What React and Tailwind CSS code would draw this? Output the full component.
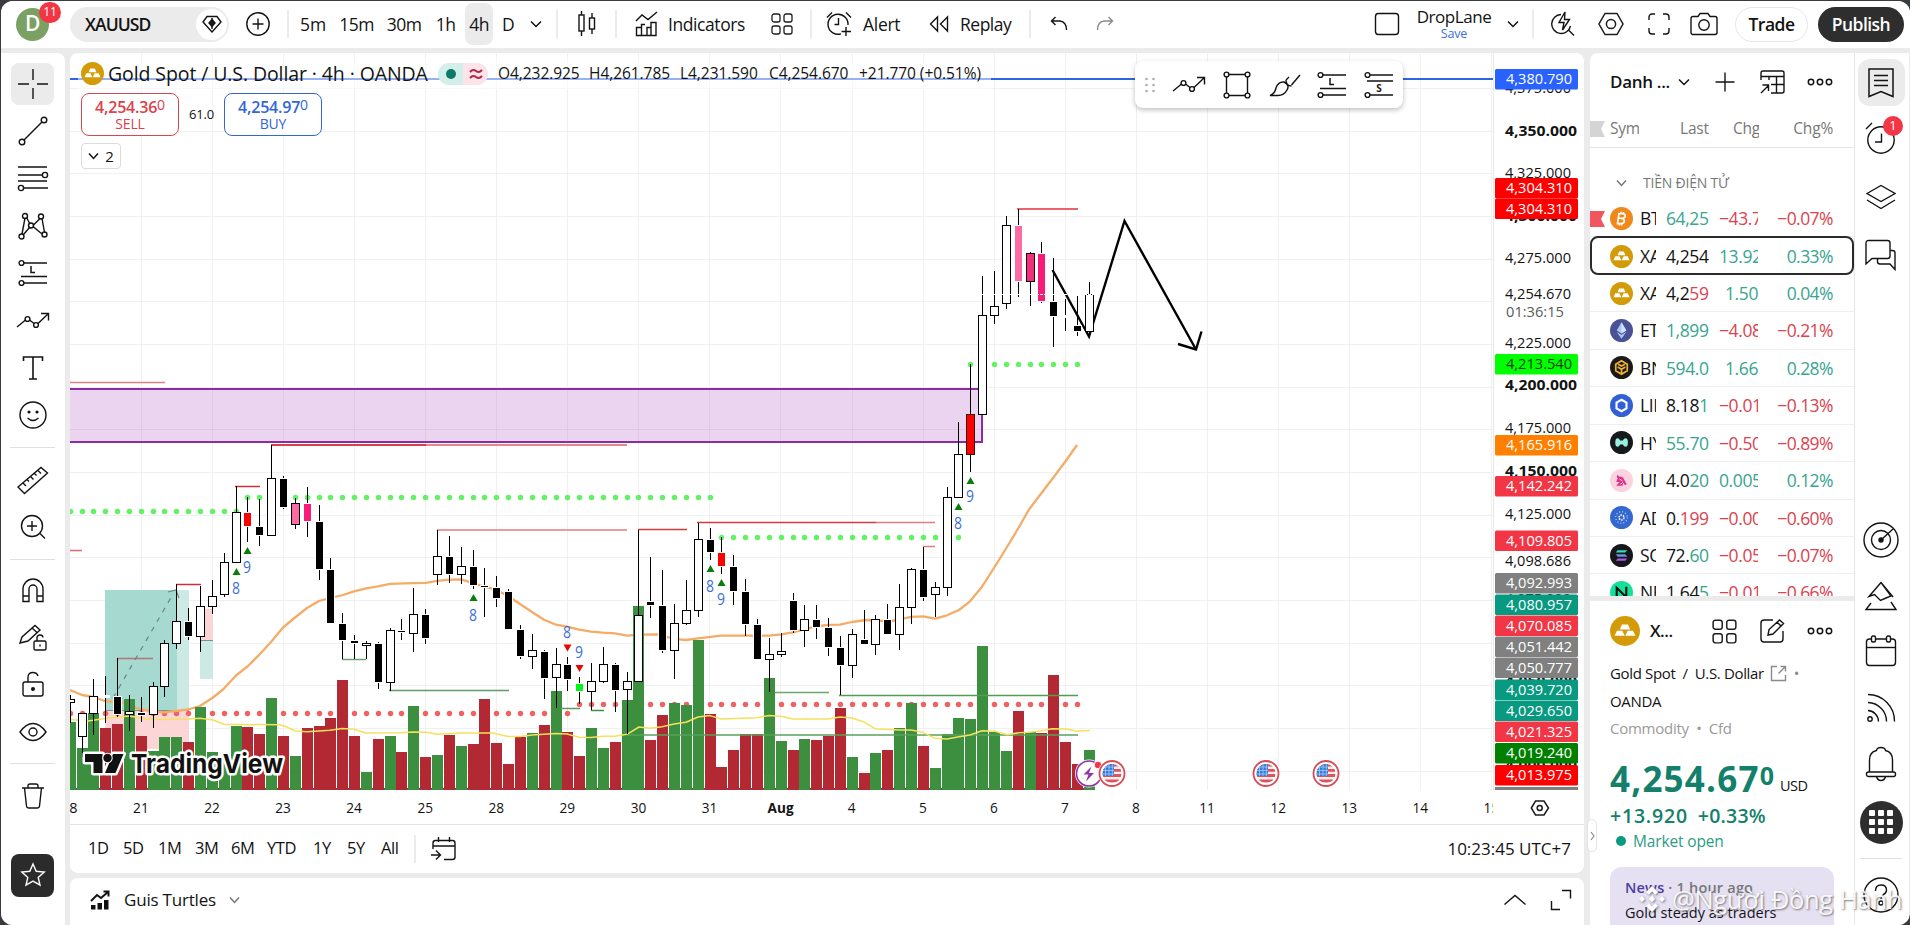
import { Fragment } from 'react';

const GRID_X = 141.7;
const barX = (k) => Math.round(140.75 + 11.85 * k);

// [index, high, bodyTop, bodyBottom, low, kind]
const candles = [
  [-6, 695, 699, 703, 723, 'w'], [-5, 713, 713, 737, 757, 'w'], [-4, 679, 696, 714, 735, 'w'], [-3, 676, 696, 697, 723, 'd'],
  [-2, 658, 697, 714, 717, 'b'], [-1, 695, 711, 715, 731, 'w'], [0, 697, 713, 715, 722, 'b'], [1, 682, 686, 715, 728, 'w'],
  [2, 640, 643, 687, 697, 'w'], [3, 584, 621, 644, 649, 'w'], [4, 608, 622, 636, 640, 'b'], [5, 586, 606, 637, 652, 'w'],
  [6, 580, 596, 607, 614, 'w'], [7, 553, 562, 595, 597, 'w'], [8, 486, 512, 563, 563, 'w'], [9, 497, 513, 526, 542, 'r'],
  [10, 499, 527, 535, 546, 'b'], [11, 445, 478, 536, 536, 'w'], [12, 476, 479, 507, 509, 'b'], [13, 498, 503, 525, 529, 'po'],
  [14, 487, 504, 521, 537, 'h'], [15, 505, 522, 569, 580, 'b'], [16, 558, 570, 623, 623, 'b'], [17, 613, 624, 640, 659, 'b'],
  [18, 635, 641, 643, 659, 'b'], [19, 641, 643, 646, 659, 'w'], [20, 642, 644, 682, 689, 'b'], [21, 628, 630, 683, 691, 'w'],
  [22, 619, 631, 632, 640, 'b'], [23, 588, 614, 634, 652, 'w'], [24, 609, 615, 638, 644, 'b'], [25, 530, 556, 575, 585, 'w'],
  [26, 536, 557, 574, 583, 'b'], [27, 547, 566, 575, 584, 'w'], [28, 550, 567, 585, 589, 'b'], [29, 568, 586, 587, 617, 'b'],
  [30, 576, 588, 598, 607, 'b'], [31, 589, 592, 629, 629, 'b'], [32, 625, 630, 656, 659, 'b'], [33, 634, 650, 657, 669, 'w'],
  [34, 650, 652, 678, 699, 'b'], [35, 648, 664, 678, 708, 'w'], [36, 657, 665, 679, 691, 'b'], [37, 677, 684, 691, 704, 'l'],
  [38, 663, 681, 692, 710, 'w'], [39, 647, 664, 682, 683, 'w'], [40, 663, 665, 690, 712, 'b'], [41, 672, 681, 690, 734, 'w'],
  [42, 530, 615, 682, 682, 'w'], [43, 557, 602, 605, 618, 'b'], [44, 570, 606, 650, 653, 'b'], [45, 604, 623, 651, 679, 'w'],
  [46, 580, 610, 624, 625, 'w'], [47, 523, 539, 611, 617, 'w'], [48, 528, 540, 552, 560, 'b'], [49, 537, 553, 566, 574, 'r'],
  [50, 555, 567, 591, 605, 'b'], [51, 579, 592, 624, 636, 'b'], [52, 619, 625, 659, 659, 'b'], [53, 638, 654, 660, 692, 'w'],
  [54, 633, 651, 655, 657, 'w'], [55, 593, 601, 630, 633, 'b'], [56, 605, 619, 631, 647, 'w'], [57, 605, 620, 627, 639, 'b'],
  [58, 618, 628, 647, 656, 'b'], [59, 636, 648, 665, 695, 'b'], [60, 629, 634, 666, 678, 'w'], [61, 610, 640, 644, 644, 'b'],
  [62, 615, 619, 645, 655, 'w'], [63, 604, 620, 634, 634, 'b'], [64, 584, 607, 635, 650, 'w'], [65, 568, 569, 608, 624, 'w'],
  [66, 547, 570, 597, 601, 'b'], [67, 582, 587, 595, 617, 'w'], [68, 487, 497, 588, 596, 'w'], [69, 422, 454, 498, 498, 'w'],
  [70, 364, 414, 455, 472, 'ro'], [71, 276, 315, 415, 415, 'w'], [72, 271, 306, 316, 324, 'w'], [73, 216, 225, 304, 309, 'w'],
  [74, 209, 226, 281, 297, 'p'], [75, 252, 253, 282, 306, 'ho'], [76, 242, 254, 301, 303, 'h'], [77, 258, 302, 316, 347, 'b'],
  [78, 299, 316, 317, 331, 'd'], [79, 296, 326, 331, 336, 'b'], [80, 282, 294, 332, 332, 'w'],
];

const kinds = {
  w: ['#ffffff', '#000000'],
  b: ['#000000', '#ffffff'],
  d: ['#ffffff', '#ffffff'],
  r: ['#ff0000', '#ffffff'],
  ro: ['#ff0000', '#3a1208'],
  p: ['#fb6ba4', '#ffffff'],
  po: ['#fb6ba4', '#000000'],
  h: ['#f81b78', '#ffffff'],
  ho: ['#f0307c', '#1a0008'],
  l: ['#00f51d', '#ffffff'],
};

// top of each volume bar, starting at index -6
const volumes = [
  'g722', 'g748', 'g713', 'r728', 'r724', 'g699', 'r736', 'g751', 'g737', 'g737', 'r742', 'g707', 'g752', 'g756', 'g726', 'r727',
  'r734', 'g698', 'r736', 'g756', 'r728', 'r726', 'r718', 'r680', 'r736', 'g772', 'r739', 'g736', 'r752', 'g706', 'r757', 'g755',
  'r735', 'g746', 'r744', 'r699', 'r743', 'r764', 'r737', 'g733', 'r725', 'g691', 'r732', 'r756', 'g728', 'g748', 'r742', 'g700',
  'g606', 'r740', 'r715', 'g703', 'g705', 'g640', 'r714', 'r767', 'r750', 'r734', 'r734', 'g678', 'g741', 'r750', 'g739', 'r740',
  'r736', 'r708', 'g757', 'r773', 'g753', 'r750', 'g728', 'g703', 'r746', 'g768', 'g734', 'g718', 'g719', 'g646', 'g732', 'g751',
  'r711', 'g732', 'r733', 'r675', 'r742', 'r764', 'g750',
];

const maLine =
  '70,690 82,695 93,697 105,701 123,703 140,709 153,711.5 164,712.3 188,709.5 200,706 213,697.5 223,689.5 236,675.5 248,666 259,655 271,642 283,627.5 295,617.5 307,608 319,601 330,598 343,595 354,591.3 366,588.3 378,586.3 390,583.9 413,583.2 426,582.8 437,580.8 449,579.6 461,579.4 473,583.2 484,586.5 496,589.7 508,596 520,604 532,612 544,619.7 556,624.7 567,626.7 579,629.7 591,631.7 603,632.7 615,633.3 627,635.6 640,634.7 657,634.3 667,637 674,638.8 686,640 698,638.4 721,635.7 769,635.7 781,634.3 793,632.4 804,629.3 816,626.5 828,624.9 840,624.7 852,622 866,620 875,620.5 890,621.3 899,619.5 911,616.8 923,616.4 935,618.6 947,615.3 959,610 970,601.3 982,586.7 994,568 1007,547 1019,527 1029,509.5 1040,495 1053,478 1065,462 1077,445';

const volumeLine =
  '70,719.5 88,721 105,718.5 129,716 143,718.5 157,719.5 188,719 200,718.3 213,720 224,724.3 237,724.5 280,724.8 287,727 295,731 307,731.8 319,731 330,730.3 342,728.6 354,729.3 366,733 400,732.7 413,732 426,732.3 437,734.3 461,733 493,733 508,736.6 520,736.6 532,735 556,733.6 567,734 579,737.3 591,737.5 603,736.2 615,736.2 627,734.3 639,727 650,728.3 662,726.7 674,724 686,722.3 698,717 710,715.6 721,719 757,717.8 769,715.5 781,716.3 793,719 828,719 840,717 852,718 864,722 875,728.7 899,730 911,730 923,732.3 935,738.3 947,739 959,736.7 970,735 982,730.8 994,731 1007,734.7 1019,732.7 1029,732.3 1040,731 1052,728.7 1066,729 1077,731.3 1090,730.5';

// [x1, x2, y, colour, width]
const levels = [
  [70, 165, 382.5, '#e08088', 1.5], [70, 82, 550.5, '#e06a72', 1.5], [117, 153, 658.5, '#b07478', 1.5], [176, 201, 584.5, '#c9303a', 1.5],
  [235, 260, 486.5, '#c9303a', 1.5], [271, 426, 445, '#dc3f4b', 2], [426, 627, 445, '#ea858e', 2], [437, 627, 530, '#ea9ca2', 2],
  [638, 687, 529.5, '#d23a3c', 1.5], [697, 876, 522.5, '#d03a40', 1.5], [876, 935, 522.5, '#e57a80', 1.5], [923, 935, 546.5, '#e57a80', 1.5],
  [1017, 1078, 209, '#e96469', 2],
  [342, 366, 659.5, '#6aa66d', 1.5], [389, 509, 690.5, '#5fa062', 1.5], [561, 580, 708.5, '#5f9a62', 1.5], [591, 604, 710.5, '#3f9142', 1.5],
  [775, 829, 692.5, '#6aa66d', 1.5], [839, 1078, 695.5, '#4f9f52', 1.5], [627, 1078, 735, '#58a05b', 1.5],
];

const greenDots = [[-6, 8, 511.5], [9, 48, 497.5], [49, 69, 537.5], [70, 79, 364.5]];
const redDots = [[-6, 36, 713.5], [37, 79, 704.5]];

// [index, triangle y, number y, number, direction]
const signals = [
  [8, 571.5, 588, '8', 'up'], [9, 550.5, 567, '9', 'up'], [28, 597.5, 615, '8', 'up'], [36, 648, 632, '8', 'down'], [37, 668.5, 652, '9', 'down'],
  [48, 568.5, 586, '8', 'up'], [49, 582.5, 599.5, '9', 'up'], [69, 506.5, 523, '8', 'up'], [70, 480.5, 496.5, '9', 'up'],
];

// [label, centre y, bold]
const priceTicks = [
  ['4,375.000', 88], ['4,350.000', 130.5, true], ['4,325.000', 173], ['4,300.000', 216, true], ['4,275.000', 257.5], ['4,254.670', 293.5],
  ['4,225.000', 343], ['4,200.000', 385, true], ['4,175.000', 428], ['4,150.000', 471, true], ['4,125.000', 513.5], ['4,098.686', 561],
  ['4,075.000', 599], ['4,050.000', 681, true], ['4,000.000', 765, true],
];

const priceTags = [
  ['4,380.790', 69, '#2962ff'], ['4,304.310', 178, '#ff0000'], ['4,304.310', 198.5, '#ff0000'], ['4,213.540', 354, '#00ff00', '#0a3d0a'],
  ['4,165.916', 435, '#ff8000'], ['4,142.242', 476, '#f23645'], ['4,109.805', 530.5, '#f23645'], ['4,092.993', 573, '#808080'],
  ['4,080.957', 594.5, '#089981'], ['4,070.085', 615.5, '#f23645'], ['4,051.442', 636.5, '#808080'], ['4,050.777', 657.5, '#808080'],
  ['4,039.720', 679.5, '#089981'], ['4,029.650', 700.5, '#089981'], ['4,021.325', 721.5, '#f23645'], ['4,019.240', 743, '#008000'],
  ['4,013.975', 765, '#ff0000'],
];

const days = ['21', '22', '23', '24', '25', '28', '29', '30', '31', 'Aug', '4', '5', '6', '7', '8', '11', '12', '13', '14', '15'];

const range = (a, b) => Array.from({ length: b - a + 1 }, (_, i) => a + i);

function Icon({ w = 28, h = 28, sw = 1.4, children, className = '', fill = 'none' }) {
  return (
    <svg width={w} height={h} viewBox={`0 0 ${w} ${h}`} fill={fill} stroke="currentColor" strokeWidth={sw} className={`shrink-0 ${className}`}>
      {children}
    </svg>
  );
}

const Chevron = ({ w = 12, className = '' }) => (
  <Icon w={w} h={8} sw={1.5} className={className}>
    <path d={`M1 1.5 L${w / 2} 6.5 L${w - 1} 1.5`} />
  </Icon>
);

const Divider = ({ className = '' }) => <div className={`h-7 w-[2px] shrink-0 bg-[#ebebeb] ${className}`} />;

function GoldIcon({ size }) {
  return (
    <svg width={size} height={size} viewBox="0 0 24 24" className="shrink-0">
      <circle cx="12" cy="12" r="12" fill="#d49b08" />
      <path d="M9.600 6.800h4.800l1.700 4H7.900zM5.600 11.800h4.200l2 4H3.600zM14.200 11.800h4.200l2 4h-8.200z" fill="#fff" />
    </svg>
  );
}

function GridIcon({ size = 22 }) {
  return (
    <svg width={size} height={size} viewBox="0 0 22 22" fill="none" stroke="#1c1c1c" strokeWidth="1.3">
      <rect x="1" y="1" width="8" height="8" rx="2" />
      <rect x="13" y="1" width="8" height="8" rx="2" />
      <rect x="1" y="13" width="8" height="8" rx="2" />
      <rect x="13" y="13" width="8" height="8" rx="2" />
    </svg>
  );
}

const DotsIcon = () => (
  <Icon w={26} h={10} sw={1.5}>
    <circle cx="4" cy="5" r="2.7" />
    <circle cx="13" cy="5" r="2.7" />
    <circle cx="22" cy="5" r="2.7" />
  </Icon>
);

const HexIcon = ({ w = 26, h = 24 }) => (
  <svg width={w} height={h} viewBox="0 0 26 24" fill="none" stroke="#1c1c1c" strokeWidth="1.5" className="shrink-0">
    <path d="M7 1.5h12L25 12l-6 10.500H7L1 12z" />
    <circle cx="13" cy="12" r="4.600" />
  </svg>
);

const PathIcon = () => (
  <Icon w={34} h={24}>
    <path d="M1 18 L9.500 11 M13.500 11 L18 14.500 M22 14.500 L32 5 M25 4.500h7.500v7" />
    <circle cx="11.500" cy="10" r="2.400" />
    <circle cx="20" cy="16" r="2.400" />
  </Icon>
);

const LongIcon = ({ letter = 'L' }) => (
  <Icon w={30} h={28}>
    <path d={letter === 'L' ? 'M6 4h23 M3 17.500h26 M6 24h23' : 'M6 4h23 M3 10h26 M6 24h23'} />
    <circle cx="3.500" cy="4" r="2.400" fill="#fff" />
    <circle cx="3.500" cy="24" r="2.400" fill="#fff" />
    {letter === 'L' ? (
      <path d="M13 7v6.500h4" strokeWidth="1.500" />
    ) : (
      <text x="15" y="20.500" fontSize="10" fontWeight="700" fill="#1c1c1c" stroke="none" textAnchor="middle">S</text>
    )}
  </Icon>
);

function Header() {
  return (
    <header className="flex h-[47px] items-center bg-white pb-[1px] text-[17.5px] font-medium tracking-[-0.5px]">
      <div className="relative flex w-[63px] justify-center">
        <div className="flex h-[33px] w-[33px] items-center justify-center rounded-full bg-[#7aa163] text-[21px] font-semibold text-white">D</div>
        <div className="absolute -top-[6px] left-[38px] flex h-[21px] w-[22px] items-center justify-center rounded-full bg-[#f23645] text-[12px] text-white tracking-normal">11</div>
      </div>
      <div className="ml-[6px] flex h-[35px] w-[159px] items-center justify-between rounded-full bg-[#ebebeb] pr-[2px] pl-[15px]">
        <span className="font-semibold tracking-[-0.9px]">XAUUSD</span>
        <span className="flex h-[31px] w-[31px] items-center justify-center rounded-full bg-white">
          <Icon w={20} h={18}>
            <path d="M5 1.500h10l4 5.500-9 10-9-10zM10 3v11" />
            <path d="M10 4.500l3 3.500-3 3.500L7 8z" fill="#1c1c1c" />
          </Icon>
        </span>
      </div>
      <div className="flex w-[58px] justify-center">
        <Icon w={24} h={24}>
          <circle cx="12" cy="12" r="11.200" />
          <path d="M12 6.500v11M6.500 12h11" />
        </Icon>
      </div>
      <Divider />
      <div className="flex w-[48px] justify-center tracking-[-0.200px]">5m</div>
      <div className="flex w-[39px] justify-center">15m</div>
      <div className="flex w-[56px] justify-center">30m</div>
      <div className="flex w-[27px] justify-center">1h</div>
      <div className="flex w-[40px] justify-center">
        <span className="flex h-[42px] w-[28px] items-center justify-center rounded-lg bg-[#ebebeb]">4h</span>
      </div>
      <div className="flex w-[18px] justify-center">D</div>
      <div className="flex w-[39px] justify-center pr-[2px]"><Chevron /></div>
      <Divider />
      <div className="flex w-[57px] justify-center">
        <Icon w={18} h={26}>
          <path d="M3.500 0v4M3.500 20v5M14 2v5M14 18v5" />
          <rect x="1" y="4" width="5" height="16" />
          <rect x="11.500" y="7" width="5" height="11" />
        </Icon>
      </div>
      <Divider />
      <Icon w={23} h={26} className="ml-[18px]">
        <path d="M1 10l6-6 6 4.500L22 1 M1.500 24.500v-8h5v8zM6.500 24.500v-11h3.500M12 24.500v-8h4v8zM16 24.500V11.500h5v13z M1.500 24.500h20" />
      </Icon>
      <span className="ml-[10px] w-[77px] tracking-[-0.420px]">Indicators</span>
      <div className="ml-[8px] flex w-[57px] justify-center"><GridIcon size={22} /></div>
      <Divider />
      <Icon w={26} h={26} className="ml-[14px]">
        <path d="M15 22.800A10 10 0 1 1 22 14M12.500 7v6.500H8.500M1 6.500L6 1.500M20 1.500l5 5M20 16v9M15.500 20.500h9.500" />
      </Icon>
      <span className="ml-[11px] w-[39px] tracking-[-0.300px]">Alert</span>
      <Icon w={20} h={18} className="ml-[27px]">
        <path d="M8.500 2v14L1.500 9zM18.500 2v14l-7-7z" />
      </Icon>
      <span className="ml-[11px] w-[53px]">Replay</span>
      <Divider className="ml-[16px]" />
      <Icon w={18} h={16} className="ml-[19px]"><path d="M5.500 1L1.500 5l4 4M1.500 5H10q6.500 1 6.500 9" /></Icon>
      <Icon w={18} h={16} className="ml-[28px] text-[#8a8a8a]"><path d="M12.500 1l4 4-4 4M16.500 5H8Q1.500 6 1.500 14" /></Icon>

      <div className="ml-auto flex items-center pr-[6px]">
        <Icon w={26} h={24}><rect x="1.500" y="1.500" width="23" height="21" rx="3" /></Icon>
        <div className="ml-[16px] w-[76px] text-center leading-none">
          <div className="text-[17px] tracking-[-0.450px]">DropLane</div>
          <div className="pt-[3px] text-[12.500px] font-normal tracking-[-0.200px] text-[#3a6fd8]">Save</div>
        </div>
        <Chevron className="ml-[15px]" />
        <Divider className="ml-[13px]" />
        <Icon w={24} h={26} className="ml-[17px]">
          <path d="M10 3.500A9.500 9.500 0 1 0 19.500 15M17 18.500l6 6M14 1L8 11.500h5L11.500 19 18.500 8.500h-5z" />
        </Icon>
        <div className="ml-[23px]"><HexIcon /></div>
        <Icon w={22} h={22} className="ml-[24px]">
          <path d="M1 7V4a3 3 0 0 1 3-3h3M15 1h3a3 3 0 0 1 3 3v3M21 15v3a3 3 0 0 1-3 3h-3M7 21H4a3 3 0 0 1-3-3v-3" />
        </Icon>
        <Icon w={28} h={24} className="ml-[20px]">
          <path d="M3 4.500h5l2-3h8l2 3h5a2 2 0 0 1 2 2v14a2 2 0 0 1-2 2H3a2 2 0 0 1-2-2v-14a2 2 0 0 1 2-2z" />
          <circle cx="14" cy="13" r="5.200" />
        </Icon>
        <div className="ml-[17px] flex h-[35px] w-[73px] items-center justify-center rounded-full border border-[#e6e6e6] tracking-[-0.500px] font-semibold">Trade</div>
        <div className="ml-[10px] flex h-[35px] w-[86px] items-center justify-center rounded-full bg-[#2e2e2e] text-white tracking-[-0.550px] font-semibold">Publish</div>
      </div>
    </header>
  );
}

function LeftTools() {
  const slot = 'flex h-[47.400px] shrink-0 items-center justify-center';
  const rule = 'mx-auto h-px w-[45px] shrink-0 bg-[#e0e0e0]';
  return (
    <nav className="flex w-[64px] shrink-0 flex-col rounded-tr-lg bg-white pt-[7px] pr-[1px]">
      <div className={slot}>
        <div className="flex h-[42px] w-[43px] items-center justify-center rounded-lg bg-[#ebebeb]">
          <Icon w={30} h={30}><path d="M15 0v11M15 19v11M0 15h11M19 15h11" /></Icon>
        </div>
      </div>
      <div className={slot}>
        <Icon w={30} h={30}>
          <circle cx="4" cy="26" r="2.800" /><circle cx="26" cy="4" r="2.800" /><path d="M6 24L24 6" />
        </Icon>
      </div>
      <div className={slot}>
        <Icon w={32} h={28}>
          <path d="M1 3h29M1 11h24M1 17h29M7 24h24" />
          <circle cx="28" cy="11" r="2.600" /><circle cx="4" cy="24" r="2.600" />
        </Icon>
      </div>
      <div className={slot}>
        <Icon w={30} h={28}>
          <path d="M4 22L7 6M8.500 5.500L12 12M5 23L12 15M15.500 13L22 6.500M24 6.500l2.500 14M24 22l-9-7.500" />
          <circle cx="7" cy="4" r="2.500" /><circle cx="23" cy="4.500" r="2.500" /><circle cx="13" cy="13.500" r="2.500" />
          <circle cx="3.500" cy="24.500" r="2.500" /><circle cx="26.500" cy="22.500" r="2.500" />
        </Icon>
      </div>
      <div className={slot}><LongIcon /></div>
      <div className={slot}><PathIcon /></div>
      <div className={slot}>
        <Icon w={22} h={26}><path d="M1.500 6V2h19v4M11 2v22M7 24h8" strokeWidth="1.600" /></Icon>
      </div>
      <div className={slot}>
        <Icon w={28} h={28}>
          <circle cx="14" cy="14" r="13" /><path d="M8.500 17q5.500 5 11 0" />
          <circle cx="10" cy="11" r="0.900" fill="#1c1c1c" /><circle cx="18" cy="11" r="0.900" fill="#1c1c1c" />
        </Icon>
      </div>
      <div className={`${rule} mt-[8px] mb-[8px]`} />
      <div className={slot}>
        <Icon w={32} h={30}>
          <path d="M1 22L24 2.500l6.500 5.500L7.500 28.500zM6 18l3 3M10 14.500l2 2M13.500 11.500l3 3M17.500 8.500l2 2M21 5.500l3 3" />
        </Icon>
      </div>
      <div className={slot}>
        <Icon w={26} h={26}>
          <circle cx="12" cy="12" r="10.500" /><path d="M12 7v10M7 12h10M20 19.500l5 5" />
        </Icon>
      </div>
      <div className={`${rule} mt-[8px] mb-[6px]`} />
      <div className={slot}>
        <Icon w={24} h={26}>
          <path d="M2 24.500V12a10 10 0 0 1 20 0v12.500h-6V12a4 4 0 0 0-8 0v12.500zM2 19h6M16 19h6" />
        </Icon>
      </div>
      <div className={slot}>
        <Icon w={28} h={28}>
          <path d="M1 20l2-6L16 2.500l5 4.500L9 18l-8 2zM13 5l5 4.500" />
          <rect x="15" y="18" width="12" height="9" rx="1.500" /><path d="M18 18v-2.500a3 3 0 0 1 6-1M21 21.500v2" />
        </Icon>
      </div>
      <div className={slot}>
        <Icon w={22} h={26}>
          <rect x="1" y="11" width="20" height="14" rx="2" /><path d="M6 11V6.500q0-5 5-5 4 0 5 3.500" />
          <circle cx="11" cy="18" r="1.300" fill="#1c1c1c" />
        </Icon>
      </div>
      <div className={slot}>
        <Icon w={28} h={20}>
          <path d="M1 10Q7 1.500 14 1.500T27 10Q21 18.500 14 18.500T1 10z" /><circle cx="14" cy="10" r="4" />
        </Icon>
      </div>
      <div className={`${rule} mt-[8px] mb-[8px]`} />
      <div className={slot}>
        <Icon w={24} h={26}>
          <path d="M1 5h22M7 5V3q0-2 2-2h6q2 0 2 2v2M3.500 5l2 18q.2 2 2 2h9q1.800 0 2-2l2-18" />
        </Icon>
      </div>
      <div className="mx-auto mt-[34px] flex h-[43px] w-[43px] shrink-0 items-center justify-center rounded-lg bg-[#2b2b2b] text-white">
        <Icon w={26} h={26}><path d="M13 2l3.200 7.300 8 .8-6 5.300 1.800 7.800-7-4.100-7 4.100 1.800-7.800-6-5.300 8-.8z" /></Icon>
      </div>
    </nav>
  );
}

function Flag({ x }) {
  return (
    <g transform={`translate(${x} 773.500)`}>
      <circle r="14" fill="#fff" />
      <circle r="12.500" fill="#fff" stroke="#d94a54" strokeWidth="1.800" />
      <clipPath id={`flag${x}`}><circle r="9.500" /></clipPath>
      <g clipPath={`url(#flag${x})`}>
        <rect x="-10" y="-10" width="20" height="20" fill="#fbeff0" />
        <path d="M-10-8.500h20M-10-3.200h20M-10 2h20M-10 7.500h20" stroke="#e0525c" strokeWidth="2.800" />
        <rect x="-10" y="-10" width="12" height="12.500" fill="#3478d8" />
        <path d="M-10-6.500H2M-10-3H2M-10 .5H2M-6.500-10V2.500M-3-10V2.500M.3-10V2.500" stroke="#a9cdf5" strokeWidth="0.800" />
      </g>
    </g>
  );
}

function Chart() {
  return (
    <svg width="1514" height="771" viewBox="70 53 1514 771" className="block" fontFamily='"Open Sans", sans-serif'>
      <clipPath id="plot"><rect x="70" y="53" width="1423" height="737" /></clipPath>
      <g clipPath="url(#plot)">
        <g fill="#f0f0f0" shapeRendering="crispEdges">
          {range(0, 19).map((i) => <rect key={i} x={Math.floor(GRID_X + 71.03 * i)} y="53" width="1" height="737" />)}
          {range(0, 16).map((i) => <rect key={i} x="70" y={Math.floor(88.6 + 42.67 * i)} width="1423" height="1" />)}
        </g>

        {/* supply zone */}
        <rect x="60" y="389" width="922" height="53" fill="rgba(156,39,176,0.2)" stroke="#8a2ca3" strokeWidth="2" />

        {/* position boxes */}
        <rect x="105" y="590" width="84" height="120.500" fill="#cce9e3" />
        <rect x="105" y="590" width="72" height="120.500" fill="#a6d9d0" />
        <rect x="105" y="710.500" width="84" height="38.500" fill="#fcd5d7" />
        <path d="M105 710.500h84" stroke="#7d8f8e" />
        <rect x="200" y="609" width="13" height="31" fill="#fcd5d7" />
        <rect x="200" y="640" width="13" height="39" fill="#cce9e3" />
        <path d="M200 640.500h13" stroke="#7d8f8e" />

        {greenDots.map(([a, b, y]) => range(a, b).map((k) => <circle key={`${y}-${k}`} cx={barX(k) + 0.5} cy={y} r="2.700" fill="#63f263" />))}
        {redDots.map(([a, b, y]) => range(a, b).map((k) => <circle key={`${y}-${k}`} cx={barX(k) + 0.5} cy={y} r="2.700" fill="#f06262" />))}
        <polyline points={maLine} fill="none" stroke="#f5ac66" strokeWidth="2.300" strokeLinejoin="round" />

        <g shapeRendering="crispEdges">
          <rect x="70" y="788" width="1020" height="2" fill="#6b4a6b" />
          {volumes.map((v, i) => {
            const top = Number(v.slice(1));
            return <rect key={i} x={barX(i - 6) - 5} y={top} width="11" height={790 - top} fill={v[0] === 'g' ? '#3b8f3e' : '#b22833'} />;
          })}
        </g>

        {levels.map(([x1, x2, y, color, w], i) => <line key={i} x1={x1} x2={x2} y1={y} y2={y} stroke={color} strokeWidth={w} />)}
        <polyline points={volumeLine} fill="none" stroke="#f5e15c" strokeWidth="1.500" strokeLinejoin="round" />

        <path d="M113 698L173 594" stroke="#6d8583" strokeWidth="1.200" strokeDasharray="5 6" />
        <path d="M168 592l8-2 3 8" fill="none" stroke="#6d8583" strokeWidth="1.200" />

        <polyline points="1052.500,270 1089,336.500 1124.500,221 1196,349.500" fill="none" stroke="#000" strokeWidth="2.400" />
        <polyline points="1178,344 1196,349.500 1201.500,331.500" fill="none" stroke="#000" strokeWidth="2.400" />

        {candles.map(([k, high, top, bottom, low, kind]) => {
          const x = barX(k);
          const [fill, stroke] = kinds[kind];
          const halo = stroke === '#ffffff';
          const t = halo ? top - 0.5 : top + 0.5;
          const b = halo ? bottom + 0.5 : bottom - 0.5;
          return (
            <g key={k}>
              <rect x={x} y={high} width="1" height={low - high} fill="#000" />
              <rect x={x - 3.5} y={t} width="8" height={Math.max(b - t, 1)} fill={fill} stroke={stroke} />
            </g>
          );
        })}

        {signals.map(([k, ty, ny, n, dir]) => {
          const x = barX(k) + 0.5;
          return (
            <g key={k}>
              {dir === 'up' ? (
                <path d={`M${x - 4} ${ty + 3.500}h8l-4-7z`} fill="#0a7d0a" />
              ) : (
                <path d={`M${x - 4} ${ty - 3.500}h8l-4 7z`} fill="#e80505" />
              )}
              <text x={x - 0.5} y={ny + 5.5} fontSize="15.500" fontWeight="500" fill="#3a6fd8" textAnchor="middle" textLength="8" lengthAdjust="spacingAndGlyphs">{n}</text>
            </g>
          );
        })}

        <path d="M976 294.500H1100" stroke="#fff" strokeDasharray="3 1" />
        <path d="M70 79H1493" stroke="#2f64e6" strokeWidth="2" />

        {/* TradingView mark */}
        <g stroke="#fff" strokeWidth="5" strokeLinejoin="round" fill="#111">
          <path d="M85 754h17.500v19h-9v-11H85zM113 754h10.500l-8 19h-10.500z" paintOrder="stroke" />
          <circle cx="107.500" cy="758" r="4.200" strokeWidth="2" paintOrder="stroke" />
          <text x="131" y="772.500" fontSize="26" fontWeight="700" fontFamily="Inter, sans-serif" textLength="152" lengthAdjust="spacingAndGlyphs" paintOrder="stroke">TradingView</text>
        </g>

        {/* events */}
        <circle cx="1089" cy="773.500" r="14" fill="#fff" />
        <circle cx="1089" cy="773.500" r="12.500" fill="#fff" stroke="#8e35a8" strokeWidth="1.600" />
        <path d="M1091.500 766.500l-8 8h5l-2.500 7 8-8.500h-5z" fill="#8e35a8" />
        <circle cx="1098" cy="765" r="3.800" fill="#f23645" stroke="#fff" strokeWidth="1" />
        <Flag x={1112} />
        <Flag x={1266} />
        <Flag x={1326} />
      </g>

      {/* price scale */}
      <rect x="1493" y="53" width="1" height="737" fill="#e8e8e8" />
      {priceTicks.map(([label, y, bold]) => (
        <text key={label} x="1505" y={y + 5} fontSize="15" fontWeight={bold ? 700 : 500} fill="#131313" textLength={bold ? 72 : 66} lengthAdjust="spacingAndGlyphs">{label}</text>
      ))}
      <text x="1506" y="316.500" fontSize="14.500" fill="#5a5a5a" textLength="58" lengthAdjust="spacingAndGlyphs">01:36:15</text>
      {priceTags.map(([label, y, bg, color = '#ffffff'], i) => (
        <Fragment key={i}>
          <rect x="1495" y={y} width="83" height="20.500" rx="1.500" fill={bg} />
          <text x="1506" y={y + 15} fontSize="15" fontWeight="500" fill={color} textLength="66" lengthAdjust="spacingAndGlyphs">{label}</text>
        </Fragment>
      ))}
      <rect x="1495" y="787" width="83" height="3" fill="#808080" />

      {/* time scale */}
      <clipPath id="times"><rect x="70" y="790" width="1423" height="34" /></clipPath>
      <g clipPath="url(#times)" fontSize="14.500" fontWeight="500" fill="#131313" textAnchor="middle">
        <text x="73.500" y="812.500">8</text>
        {days.map((d, i) => (
          <text key={d} x={GRID_X - 0.8 + 71.08 * i} y="812.500" fontWeight={d === 'Aug' ? 700 : 500} textLength={d === 'Aug' ? 26 : d.length * 7.8} lengthAdjust="spacingAndGlyphs">{d}</text>
        ))}
      </g>
      <g transform="translate(1530.500 800)" fill="none" stroke="#1c1c1c" strokeWidth="1.500">
        <path d="M5 1h8.500l4.500 7-4.500 7H5L.8 8z" />
        <circle cx="9.200" cy="8" r="2.500" />
      </g>
    </svg>
  );
}

function Legend() {
  return (
    <div className="absolute top-[5px] left-[8px]">
      <div className="flex h-[31px] items-center bg-white/50 pr-[9px] pl-[3px]">
        <GoldIcon size={23} />
        <span className="ml-[4px] w-[319px] text-[19.500px] font-medium tracking-[-0.100px] whitespace-nowrap">Gold Spot&nbsp;/&nbsp;U.S. Dollar · 4h · OANDA</span>
        <span className="ml-[11px] flex h-[22px] w-[50px] overflow-hidden rounded-full">
          <span className="flex w-1/2 items-center justify-center bg-[#d3efe9]"><i className="h-[10px] w-[10px] rounded-full bg-[#0c7a66]" /></span>
          <span className="flex w-1/2 items-center justify-center bg-[#fde3ea] text-[#b22847]">
            <Icon w={14} h={12} sw={2}><path d="M1 4q3-3.500 6-1t6-1M1 10q3-3.500 6-1t6-1" /></Icon>
          </span>
        </span>
        <div className="ml-[10px] flex text-[15.500px] tracking-[-0.050px] whitespace-nowrap">
          <span className="w-[91px]">O4,232.925</span>
          <span className="w-[91px]">H4,261.785</span>
          <span className="w-[89px]">L4,231.590</span>
          <span className="w-[90px]">C4,254.670</span>
          <span className="w-[123px]">+21.770 (+0.51%)</span>
        </div>
      </div>
      <div className="mt-[4px] ml-[3px] flex items-center leading-none">
        <div className="flex h-[43px] w-[98px] flex-col items-center justify-center rounded-lg border border-[#d8474f] bg-white text-[#dc4048]">
          <div className="text-[16px] font-semibold tracking-[-0.200px]">4,254.36<sup className="top-[-3px] text-[14px] font-normal">0</sup></div>
          <div className="mt-[2px] text-[14px] tracking-[-0.200px]">SELL</div>
        </div>
        <span className="w-[45px] text-center text-[13px] tracking-[-0.200px]">61.0</span>
        <div className="flex h-[43px] w-[98px] flex-col items-center justify-center rounded-lg border border-[#3568cf] bg-white text-[#3165d8]">
          <div className="text-[16px] font-semibold tracking-[-0.200px]">4,254.97<sup className="top-[-3px] text-[14px] font-normal">0</sup></div>
          <div className="mt-[2px] text-[14px] tracking-[-0.200px]">BUY</div>
        </div>
      </div>
      <div className="mt-[7px] ml-[3px] flex h-[26px] w-[40px] items-center justify-center gap-[6px] rounded border border-[#dcdcdc] bg-white text-[15px]">
        <Chevron w={11} />2
      </div>
    </div>
  );
}

function FloatingTools() {
  return (
    <div className="absolute top-[8px] left-[1065px] flex h-[47px] w-[268px] items-center rounded-lg bg-white pl-[10px] shadow-[0_2px_5px_rgba(0,0,0,0.25)]">
      <svg width="10" height="16" fill="#adadad">
        {[2, 8, 14].map((y) => <Fragment key={y}><circle cx="1.500" cy={y} r="1.300" /><circle cx="8.500" cy={y} r="1.300" /></Fragment>)}
      </svg>
      <div className="ml-[17px]"><PathIcon /></div>
      <Icon w={28} h={28} className="ml-[17px]">
        <path d="M6 3.500h16M6 24.500h16M3.500 6v16M24.500 6v16" />
        <circle cx="3.500" cy="3.500" r="2.400" /><circle cx="24.500" cy="3.500" r="2.400" /><circle cx="3.500" cy="24.500" r="2.400" /><circle cx="24.500" cy="24.500" r="2.400" />
      </Icon>
      <Icon w={32} h={28} className="ml-[18px]">
        <path d="M1 24.500q5-2 6-7.500 2-6.500 8-6 6 3 3 8-3 5.500-9 5.500zM17 9q0 6 5.500 6M17 9l3-3M22.500 14L31 4" />
      </Icon>
      <div className="ml-[16px]"><LongIcon /></div>
      <div className="ml-[17px]"><LongIcon letter="S" /></div>
    </div>
  );
}

function BottomBars() {
  const ranges = [['1D', 'w-[35px]'], ['5D', 'w-[35px]'], ['1M', 'w-[37px]'], ['3M', 'w-[36px]'], ['6M', 'w-[36px]'], ['YTD', 'w-[46px]'], ['1Y', 'w-[34px]'], ['5Y', 'w-[34px]'], ['All', 'w-[33px]']];
  return (
    <>
      <div className="flex h-[49px] items-center rounded-b-lg border-t border-[#e4e4e4] bg-white pr-[13px] pb-[1px] pl-[18px] text-[16.500px] font-medium tracking-[-0.400px]">
        {ranges.map(([r, w]) => <span key={r} className={w}>{r}</span>)}
        <Divider />
        <Icon w={26} h={24} className="ml-[15px]">
          <path d="M2 12V6q0-2.500 2.500-2.500h17Q24 3.500 24 6v14q0 2.500-2.500 2.500H13M2 9h22M7.500 0v5M18.500 0v5M0 18h9M5 13.500L9.500 18 5 22.500" />
        </Icon>
        <span className="ml-auto text-right text-[17px] tracking-[0px] whitespace-nowrap">10:23:45 UTC+7</span>
      </div>
      <div className="mt-[5px] flex h-[47px] items-center rounded-t-lg bg-white pr-[12px] pb-[3px] pl-[20px] text-[17px] font-medium tracking-[-0.200px]">
        <Icon w={20} h={20} sw={2}>
          <path d="M1 11l6-6 4 3 7-6M13.500 1.500h5v5" />
          <path d="M1 15h4.500v4.500H1zM7.500 13H12v6.500H7.500zM14 10h4.500v9.500H14z" fill="#111" stroke="none" />
        </Icon>
        <span className="ml-[14px]">Guis Turtles</span>
        <Chevron w={11} className="ml-[13px] text-[#777]" />
        <Icon w={24} h={12} className="ml-auto"><path d="M1.500 10.500L12 1.500l10.500 9" /></Icon>
        <Icon w={22} h={22} className="ml-[23px]"><path d="M12 1.500h8.500v8M1.500 12v8.500H10" /></Icon>
      </div>
    </>
  );
}

const coin = {
  btc: (
    <g>
      <circle cx="12" cy="12" r="12" fill="#f0891c" />
      <path d="M9.500 6.500l-1.800 11M8.300 7h5.200q2.600.3 2.300 2.600-.4 2.200-3 2.200H9q5.900-.3 5.900 2.600 0 2.900-3.400 2.900H7M11.500 5v2M14 5.300v2M10 17v2.200M12.500 17v2.200" fill="none" stroke="#fff" strokeWidth="1.700" />
    </g>
  ),
  eth: (
    <g>
      <circle cx="12" cy="12" r="12" fill="#4a5296" />
      <path d="M12 3.500l5 8.500-5 3-5-3zM7 13.500l5 3 5-3-5 7z" fill="#a9c4f5" />
      <path d="M12 3.500v11.500l5-3z" fill="#d3e2fb" />
    </g>
  ),
  bnb: (
    <g>
      <circle cx="12" cy="12" r="12" fill="#1a1a1a" />
      <path d="M12 5l6 3.500v7L12 19l-6-3.500v-7zM8.500 8.500L12 10.500l3.500-2M8 11.500l4 2.300 4-2.300M12 14v4.500" fill="none" stroke="#eeb033" strokeWidth="1.800" />
    </g>
  ),
  link: (
    <g>
      <circle cx="12" cy="12" r="12" fill="#335fd6" />
      <path d="M12 6l5.200 3v6L12 18l-5.200-3V9z" fill="none" stroke="#fff" strokeWidth="2.200" />
    </g>
  ),
  hype: (
    <g>
      <circle cx="12" cy="12" r="12" fill="#171a1c" />
      <path d="M5.500 12q0-4.500 2.500-4.500 1.500 0 2.500 2.300h3q1-2.300 2.700-2.300 2.500 0 2.500 4.500t-2.500 4.500q-1.700 0-2.700-2.500h-3Q9.500 16.500 8 16.500 5.500 16.500 5.500 12z" fill="#97f0e0" />
    </g>
  ),
  uni: (
    <g>
      <circle cx="12" cy="12" r="12" fill="#fbd3df" />
      <path d="M8 6l1.500 2q4-.5 5.500 3.500l2.500 4.500-2 1-1.500-3-1 3.500H6.500l3.500-4H6.500l1.500-3.500-1-2z" fill="#e0318a" />
      <path d="M10 10.500l3 2M11 16l2-2" stroke="#fff" />
    </g>
  ),
  ada: (
    <g>
      <circle cx="12" cy="12" r="12" fill="#3468d1" />
      <circle cx="12" cy="12" r="2.600" fill="none" stroke="#fff" strokeWidth="1.600" strokeDasharray="1.600 1.100" />
      <circle cx="12" cy="12" r="6" fill="none" stroke="#cfe0ff" strokeWidth="1.200" strokeDasharray="1 2.140" />
    </g>
  ),
  sol: (
    <g>
      <circle cx="12" cy="12" r="12" fill="#16171c" />
      <path d="M8 6.500h10l-2 2.400H6z" fill="#2fe0b0" />
      <path d="M6 10.800h10l2 2.400H8z" fill="#6c8fe0" />
      <path d="M8 15.200h10l-2 2.400H6z" fill="#a95be8" />
    </g>
  ),
  near: (
    <g>
      <circle cx="12" cy="12" r="12" fill="#15e09a" />
      <path d="M7 18V7l10 10V6" fill="none" stroke="#111" strokeWidth="2.200" />
    </g>
  ),
};

const G = 'text-[#38a58f]';
const R = 'text-[#db4350]';
const rows = [
  { icon: 'btc', sym: 'BT', last: ['', '64,25'], c: G, chg: '−43.73', pct: '−0.07%', t: R, flag: true },
  { icon: 'gold', sym: 'XA', last: ['4,254', ''], c: G, chg: '13.920', pct: '0.33%', t: G, active: true },
  { icon: 'gold', sym: 'XA', last: ['4,2', '59'], c: R, chg: '1.50', pct: '0.04%', t: G, fit: true },
  { icon: 'eth', sym: 'ET', last: ['', '1,899'], c: G, chg: '−4.08', pct: '−0.21%', t: R },
  { icon: 'bnb', sym: 'BN', last: ['', '594.0'], c: G, chg: '1.66', pct: '0.28%', t: G, fit: true },
  { icon: 'link', sym: 'LIN', last: ['8.18', '1'], c: G, chg: '−0.011', pct: '−0.13%', t: R },
  { icon: 'hype', sym: 'HY', last: ['', '55.70'], c: G, chg: '−0.50', pct: '−0.89%', t: R },
  { icon: 'uni', sym: 'UN', last: ['4.0', '20'], c: G, chg: '0.005', pct: '0.12%', t: G },
  { icon: 'ada', sym: 'AD', last: ['0.', '199'], c: R, chg: '−0.00', pct: '−0.60%', t: R },
  { icon: 'sol', sym: 'SO', last: ['72.', '60'], c: G, chg: '−0.05', pct: '−0.07%', t: R },
  { icon: 'near', sym: 'NE', last: ['1.64', '5'], c: G, chg: '−0.01', pct: '−0.66%', t: R },
];

function Row({ row }) {
  return (
    <div className={`relative flex h-[37.450px] shrink-0 items-center pl-[20px] text-[17.500px] font-medium tracking-[-0.400px] ${row.active ? '' : 'border-b border-[#efefef]'}`}>
      {row.active && <div className="absolute inset-x-0 -top-px bottom-0 rounded-lg border-2 border-[#2b2b2b]" />}
      {row.flag && (
        <svg width="15" height="16" className="absolute top-[11px] left-0"><path d="M0 0h15l-4 8 4 8H0z" fill="#f05560" /></svg>
      )}
      {row.icon === 'gold' ? <GoldIcon size={23} /> : <svg width="23" height="23" viewBox="0 0 24 24" className="shrink-0">{coin[row.icon]}</svg>}
      <span className="ml-[7px] w-[16px] overflow-hidden font-normal whitespace-nowrap">{row.sym}</span>
      <span className="ml-[10px] w-[44px] overflow-hidden whitespace-nowrap">{row.last[0]}<span className={row.c}>{row.last[1]}</span></span>
      <span className={`ml-[9px] flex w-[39px] overflow-hidden whitespace-nowrap ${row.fit ? 'justify-end' : ''} ${row.t}`}>{row.chg}</span>
      <span className={`ml-auto mr-[21px] tracking-[-0.550px] ${row.t}`}>{row.pct}</span>
    </div>
  );
}

function Watchlist() {
  return (
    <div className="flex h-[543px] shrink-0 flex-col overflow-hidden rounded-tl-lg bg-white">
      <div className="flex h-[58px] shrink-0 items-center pl-[20px]">
        <span className="w-[60px] text-[17px] font-semibold tracking-[-0.300px] whitespace-nowrap">Danh ...</span>
        <Chevron className="ml-[8px]" />
        <Icon w={20} h={20} className="ml-[25px]"><path d="M10 .5v19M.5 10h19" /></Icon>
        <Icon w={26} h={26} className="ml-[24px]">
          <path d="M2 11V4q0-2 2-2h19q2 0 2 2v18q0 2-2 2H12M2 7.500h23M10 7.500V11M17.500 7.500V24M12 15.500h13M2 24l7.500-7.500M3.500 16h6v6" />
        </Icon>
        <div className="ml-[22px]"><DotsIcon /></div>
      </div>
      <div className="flex h-[37px] shrink-0 items-center border-b border-[#e6e6e6] pr-[21px] text-[15.500px] tracking-[-0.200px] text-[#777]">
        <svg width="15" height="16"><path d="M0 0h15l-4 8 4 8H0z" fill="#d4d4d4" /></svg>
        <span className="ml-[5px] w-[29px] overflow-hidden">Symbol</span>
        <span className="ml-[41px] w-[29px] overflow-hidden whitespace-nowrap">Last</span>
        <span className="ml-[24px] w-[26px] overflow-hidden">Chg</span>
        <span className="ml-auto">Chg%</span>
      </div>
      <div className="flex h-[52px] shrink-0 items-end pb-[7px] pl-[26px] text-[14px] tracking-[-0.200px] text-[#777]">
        <Chevron w={11} className="mb-[6px]" />
        <span className="ml-[16px]">TIỀN ĐIỆN TỬ</span>
      </div>
      {rows.map((row, i) => <Row key={i} row={row} />)}
    </div>
  );
}

function Details() {
  return (
    <div className="mt-[5px] flex min-h-0 grow flex-col overflow-hidden bg-white px-[20px]">
      <div className="mt-[14px] flex h-[32px] shrink-0 items-center">
        <GoldIcon size={30} />
        <span className="ml-[10px] w-[28px] text-[17px] font-semibold tracking-[-0.500px] whitespace-nowrap">X...</span>
        <div className="ml-[34px]"><GridIcon size={25} /></div>
        <Icon w={26} h={26} className="ml-[22px]">
          <path d="M14 2H5Q2 2 2 5v16q0 3 3 3h16q3 0 3-3v-8M9 17l1-5.500L20.500 2l4 3.500L14 16zM18 4l4 4" />
        </Icon>
        <div className="ml-[22px]"><DotsIcon /></div>
      </div>
      <div className="mt-[12px] shrink-0 text-[15px] leading-[28px] tracking-[-0.350px]">
        <div className="flex items-center whitespace-nowrap">
          <span>Gold Spot&nbsp; /&nbsp; U.S. Dollar</span>
          <Icon w={17} h={17} className="ml-[6px] text-[#8a8a8a]"><path d="M7 1.500H1.500v14h14V10M10.500 1.500h5v5M15.500 1.500l-7 7" /></Icon>
          <span className="ml-[7px] text-[#8a8a8a]">•</span>
        </div>
        <div>OANDA</div>
        <div className="-mt-[1px] tracking-[-0.250px] text-[#9a9a9a]">Commodity&nbsp; •&nbsp; Cfd</div>
      </div>
      <div className="mt-[15px] flex shrink-0 items-start text-[#12806a]">
        <span className="text-[35px] leading-[44px] font-bold tracking-[1.200px]">4,254.67</span>
        <span className="text-[25px] leading-[36px] font-bold">0</span>
        <span className="ml-[6px] text-[14.500px] leading-[57px] tracking-[-0.500px] text-[#131313]">USD</span>
      </div>
      <div className="-mt-[12px] flex shrink-0 gap-[10px] text-[19.500px] leading-[28px] font-semibold text-[#12806a]">
        <span className="tracking-[0.800px]">+13.920</span><span className="tracking-[0.200px]">+0.33%</span>
      </div>
      <div className="-mt-[1px] flex shrink-0 items-center pl-[6px] text-[15.500px] leading-[24px] tracking-[-0.150px] text-[#2d9c86]">
        <i className="mr-[7px] h-[10px] w-[10px] rounded-full bg-[#089981]" />Market open
      </div>
      <div className="mt-[14px] grow rounded-t-xl bg-[#e6e0f3] px-[15px] pt-[8px] text-[14.500px] whitespace-nowrap">
        <div className="leading-[25px] font-semibold tracking-[0.200px] text-[#777]"><span className="text-[#4a3f9f]">News</span> · 1 hour ago</div>
        <div className="leading-[25px]">Gold steady as traders</div>
      </div>
    </div>
  );
}

function Rail() {
  const slot = 'flex h-[58.500px] shrink-0 items-center justify-center';
  return (
    <aside className="flex w-[55px] shrink-0 flex-col border-l border-[#e6e6e6] bg-white pr-[2px]">
      <div className="mt-[6px] flex h-[47px] items-center justify-center">
        <div className="flex h-[47px] w-[47px] items-center justify-center rounded-xl bg-[#ebebeb]">
          <Icon w={26} h={30} sw={1.500}><path d="M1 1h24v27.500L13 23.500 1 28.500zM6 7.500h14M6 12.500h14M6 17.500h14" /></Icon>
        </div>
      </div>
      <div className={`relative mt-[3px] ${slot}`}>
        <Icon w={32} h={32}>
          <circle cx="16" cy="18" r="13.200" /><path d="M16.500 11.500V20H10M1 7l6-6M26 1l5 5" />
        </Icon>
        <span className="absolute top-[7px] right-[4px] flex h-[20px] w-[20px] items-center justify-center rounded-full bg-[#f23645] text-[13px] text-white">1</span>
      </div>
      <div className={slot}>
        <Icon w={30} h={26}><path d="M1 9.500L15 1.500l14 8-14 8zM1 16l14 8.500L29 16" /></Icon>
      </div>
      <div className={slot}>
        <Icon w={32} h={32}>
          <path d="M1 25V4q0-2.500 2.500-2.500h19Q25 1.500 25 4v13q0 2.500-2.500 2.500H7zM25 11.500h2.500Q30 11.500 30 14v16.500L25 25H15q-2.500 0-2.500-2.500v-3" />
        </Icon>
      </div>
      <div className="h-[226px] shrink-0" />
      <div className={slot}>
        <Icon w={36} h={36}>
          <circle cx="18" cy="18" r="17" /><circle cx="18" cy="18" r="9.500" /><circle cx="18" cy="18" r="2" fill="#111" /><path d="M18 18L30 7" />
        </Icon>
      </div>
      <div className="flex h-[53px] shrink-0 items-center justify-center">
        <Icon w={34} h={30}>
          <path d="M17 1.500L5 15.500l5.500-2 6 6L22 17l5-2zM17 1.500L29 16M7 22l-5 6.500h30L27 21" />
        </Icon>
      </div>
      <div className={slot}>
        <Icon w={32} h={32}>
          <rect x="1.500" y="4" width="29" height="26.500" rx="3" /><path d="M1.500 12.500h29" />
          <rect x="6.500" y="1" width="4" height="6" rx="1.500" fill="#fff" /><rect x="21.500" y="1" width="4" height="6" rx="1.500" fill="#fff" />
        </Icon>
      </div>
      <div className="flex h-[54px] shrink-0 items-center justify-center">
        <Icon w={30} h={30}>
          <path d="M2 1.500A26.500 26.500 0 0 1 28.500 28.500M2 9.500A19 19 0 0 1 20.500 28.500M2 17.500A11 11 0 0 1 12.500 28.500" /><circle cx="4" cy="26" r="2.200" />
        </Icon>
      </div>
      <div className={slot}>
        <Icon w={32} h={36}>
          <path d="M4.500 26V14q0-8 7-9.500Q12 1.500 16 1.500t4.500 3q7 1.500 7 9.500v12M11.500 30.500q1 4 4.500 4t4.500-4" /><rect x="1.500" y="26" width="29" height="4.500" rx="2" />
        </Icon>
      </div>
      <div className="flex h-[58px] shrink-0 items-center justify-center">
        <div className="flex h-[43px] w-[43px] items-center justify-center rounded-full bg-[#2e2e2e]">
          <svg width="24" height="24" fill="#fff">
            {[0, 9, 18].map((y) => [0, 9, 18].map((x) => <rect key={`${x}${y}`} x={x} y={y} width="6" height="6" rx="1" />))}
          </svg>
        </div>
      </div>
      <div className="mx-auto mt-[7px] h-px w-[42px] shrink-0 bg-[#e0e0e0]" />
      <div className="mt-[7px] flex h-[58px] shrink-0 items-center justify-center">
        <Icon w={36} h={36}>
          <circle cx="18" cy="18" r="17" /><path d="M12.500 14q0-6 5.500-6t5.500 5q0 3-3 4.500-2.500 1.500-2.500 4.500" /><circle cx="18" cy="26" r="2" />
        </Icon>
      </div>
    </aside>
  );
}

export default function App() {
  return (
    <div className="relative h-[925px] w-[1910px] overflow-hidden bg-[#3a3b3e] pt-[1px] pl-[1px] font-['Open_Sans',sans-serif] text-[#131313]">
      <div className="h-[924px] w-[1909px] overflow-hidden rounded-xl bg-[#ebebeb]">
        <Header />
        <div className="mt-[5px] flex h-[872px]">
          <LeftTools />
          <main className="ml-[5px] w-[1514px] shrink-0">
            <div className="relative overflow-hidden rounded-t-lg bg-white">
              <Chart />
              <Legend />
              <FloatingTools />
            </div>
            <BottomBars />
          </main>
          <section className="relative ml-[6px] flex w-[264px] shrink-0 flex-col">
            <Watchlist />
            <Details />
            <div className="absolute top-[766px] left-[-3px] flex h-[33px] w-[10px] items-center justify-center rounded-full border border-[#e4e4e4] bg-white text-[#888]">
              <Icon w={5} h={10} sw={1.2}><path d="M1 1l3 4-3 4" /></Icon>
            </div>
          </section>
          <Rail />
        </div>
      </div>
      <div className="absolute right-[8px] bottom-[8px] flex items-center gap-[6px] text-[25.500px] leading-[36px] tracking-[-0.350px] whitespace-nowrap text-white/90 [text-shadow:1px_1px_2px_rgba(90,90,90,0.8)]">
        <svg width="28" height="28" viewBox="0 0 28 28" fill="#fff" className="drop-shadow-[1px_1px_1px_rgba(90,90,90,0.7)]">
          <path d="M14 1l6 6-2.700 2.700L14 6.400l-3.300 3.300L8 7zM14 10.800l3.200 3.200-3.200 3.200-3.200-3.200zM4 11l3 3-3 3-3-3zM24 11l3 3-3 3-3-3zM14 27l-6-6 2.700-2.700 3.300 3.300 3.300-3.300L20 21z" />
        </svg>
        <span>@Người Đồng Hành</span>
      </div>
    </div>
  );
}
